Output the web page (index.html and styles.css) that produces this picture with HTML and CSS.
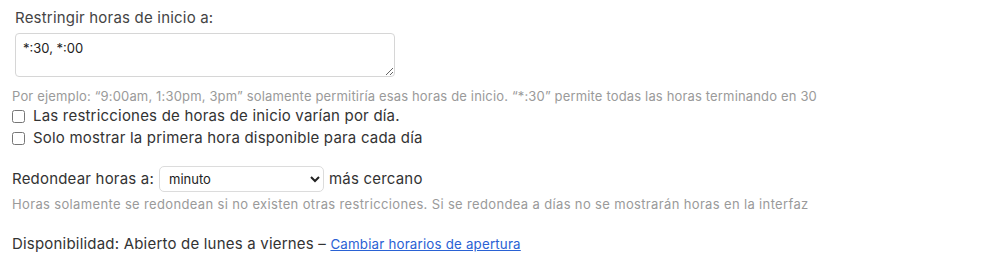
FILE: index.html
```html
<!DOCTYPE html>
<html lang="es">
<head>
<meta charset="utf-8">
<link rel="stylesheet" href="styles.css">
</head>
<body>
<div class="page">
  <div class="field-block">
    <label class="label" for="hrs">Restringir horas de inicio a:</label>
    <textarea id="hrs" class="textarea">*:30, *:00</textarea>
  </div>
  <div class="help help-first">Por ejemplo: “9:00am, 1:30pm, 3pm” solamente permitiría esas horas de inicio. “*:30” permite todas las horas terminando en 30</div>
  <label class="check"><input type="checkbox"><span>Las restricciones de horas de inicio varían por día.</span></label>
  <label class="check"><input type="checkbox"><span>Solo mostrar la primera hora disponible para cada día</span></label>
  <div class="round-row">
    <span>Redondear horas a:</span>
    <select class="select"><option>minuto</option></select>
    <span>más cercano</span>
  </div>
  <div class="help help-round">Horas solamente se redondean si no existen otras restricciones. Si se redondea a días no se mostrarán horas en la interfaz</div>
  <div class="avail">Disponibilidad: Abierto de lunes a viernes – <a href="#" class="link">Cambiar horarios de apertura</a></div>
</div>
</body>
</html>
```

FILE: styles.css
```css
html, body {
  margin: 0;
  padding: 0;
  background: #ffffff;
}
.page {
  font-family: Inter, "Liberation Sans", Arial, sans-serif;
  color: #333333;
  font-size: 15px;
  letter-spacing: 0.2px;
  padding: 8px 12px 0 12px;
}
.field-block {
  padding-left: 3px;
  display: flex;
  flex-direction: column;
}
.label {
  color: #444444;
  line-height: 20px;
}
.textarea {
  margin-top: 5px;
  width: 380px;
  height: 44px;
  box-sizing: border-box;
  border: 1px solid #d6d6d6;
  border-radius: 4px;
  padding: 6px 7px;
  font-family: Inter, "Liberation Sans", Arial, sans-serif;
  font-size: 13px;
  color: #222;
  resize: vertical;
}
.help {
  font-size: 13px;
  color: #9a9a9a;
  line-height: 18px;
}
.help-first {
  margin-top: 10px;
  letter-spacing: 0.16px;
}
.help-round {
  margin-top: 3px;
  letter-spacing: 0.35px;
}
.check {
  display: flex;
  align-items: center;
  line-height: 22px;
}
.check input {
  margin: 0 8px 0 0;
  width: 13px;
  height: 13px;
}
.round-row {
  margin-top: 17px;
  display: flex;
  align-items: center;
  gap: 5px;
  line-height: 26px;
}
.select {
  width: 165px;
  height: 26px;
  box-sizing: border-box;
  border: 1px solid #dcdcdc;
  border-radius: 5px;
  background: #fff;
  font-family: Inter, "Liberation Sans", Arial, sans-serif;
  font-size: 13px;
  color: #222;
  padding: 0 5px;
}
.avail {
  margin-top: 21px;
  line-height: 20px;
}
.link {
  font-size: 13.3px;
  color: #2a62d4;
  text-decoration: underline;
}
```
